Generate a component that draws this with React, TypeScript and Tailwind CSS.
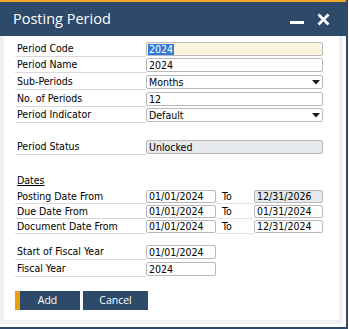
import React from 'react';

const labelFont = "font-['DejaVu_Sans_Condensed','Liberation_Sans',sans-serif] text-[10.5px] text-black";

function Row({ label, h, children }: { label: string; h: string; children?: React.ReactNode }) {
  return (
    <div className={`flex ${h}`}>
      <div className={`w-[131px] shrink-0 border-b border-[#d9d9d9] flex items-center pl-[2px] pt-[1px] ${labelFont}`}>{label}</div>
      {children}
    </div>
  );
}

function Field({ value, w = 'w-[177px]', h = 'h-[14px]', bg = 'bg-white', arrow, selected }: { value: string; w?: string; h?: string; bg?: string; arrow?: boolean; selected?: boolean }) {
  return (
    <div className={`${w} ${h} ${bg} self-end mb-[1px] shrink-0 border border-[#b9b9b9] rounded-[2px] flex items-center pl-[1px] pr-[2px] pt-[1px] ${labelFont} text-[#111]`}>
      {selected ? <span className="bg-[#2f7ad6] text-white px-[1px] leading-[11px]">{value}</span> : <span className="px-[1px]">{value}</span>}
      {arrow && (
        <svg className="ml-auto" width="8" height="5" viewBox="0 0 8 5">
          <polygon points="0,0 8,0 4,4.5" fill="#1a1a1a" />
        </svg>
      )}
    </div>
  );
}

function DateRow({ label, from, to, toBg = 'bg-white' }: { label: string; from: string; to: string; toBg?: string }) {
  return (
    <Row label={label} h="h-[15px]">
      <Field value={from} w="w-[70px]" h="h-[13px]" />
      <div className={`w-[38px] shrink-0 border-b border-[#e3e3e3] flex items-center pl-[6px] pt-[1px] ${labelFont}`}>To</div>
      <Field value={to} w="w-[69px]" h="h-[13px]" bg={toBg} />
    </Row>
  );
}

export default function App() {
  return (
    <div className="w-[349px] h-[329px] bg-white overflow-hidden">
      <div className="w-[348px] h-[329px] flex flex-col border-r-2 border-b-2 border-[#2d4a6a]">
        <header className="h-[36px] shrink-0 bg-[#2d4a6a] border-t-2 border-[#eda623] flex items-center pl-[13px] pr-[16px]">
          <span className="font-['Open_Sans',sans-serif] text-[14.5px] text-white">Posting Period</span>
          <div className="ml-auto flex items-center gap-[13px]">
            <div className="w-[14px] h-[3px] bg-white mt-[6px]" />
            <svg width="13" height="13" viewBox="0 0 13 13">
              <path d="M1.5 1.5 L11.5 11.5 M11.5 1.5 L1.5 11.5" stroke="white" strokeWidth="2.8" />
            </svg>
          </div>
        </header>

        <div className="flex-1 flex flex-col bg-white pr-[3px] pb-[3px]">
          <div className="flex-1 flex flex-col bg-[#f0f0f0] px-[4px] pb-[4px]">
            <div className="flex-1 bg-white pl-[11px] pt-[4px] flex flex-col">
              <Row label="Period Code" h="h-[17px]">
                <Field value="2024" bg="bg-[#fdf4dd]" selected />
              </Row>
              <Row label="Period Name" h="h-[16px]">
                <Field value="2024" />
              </Row>
              <Row label="Sub-Periods" h="h-[17px]">
                <Field value="Months" arrow />
              </Row>
              <Row label="No. of Periods" h="h-[17px]">
                <Field value="12" />
              </Row>
              <Row label="Period Indicator" h="h-[16px]">
                <Field value="Default" arrow />
              </Row>

              <div className="h-[16px]" />
              <Row label="Period Status" h="h-[16px]">
                <Field value="Unlocked" bg="bg-[#e6e9ed]" />
              </Row>

              <div className="h-[20px]" />
              <div className={`h-[14px] flex items-end pl-[2px] ${labelFont}`}>
                <span className="underline underline-offset-[1px]">Dates</span>
              </div>
              <DateRow label="Posting Date From" from="01/01/2024" to="12/31/2026" toBg="bg-[#e6e9ed]" />
              <DateRow label="Due Date From" from="01/01/2024" to="01/31/2024" />
              <DateRow label="Document Date From" from="01/01/2024" to="12/31/2024" />

              <div className="h-[10px]" />
              <Row label="Start of Fiscal Year" h="h-[16px]">
                <Field value="01/01/2024" w="w-[70px]" />
              </Row>
              <Row label="Fiscal Year" h="h-[17px]">
                <Field value="2024" w="w-[70px]" />
              </Row>

              <div className="mt-[14px] flex gap-[3px]">
                <button className="w-[65px] h-[19px] bg-[#2d4a6a] border-l-[5px] border-[#e8a00c] font-['Open_Sans',sans-serif] text-[10.5px] text-white flex items-center justify-center pr-[5px]">
                  Add
                </button>
                <button className="w-[65px] h-[19px] bg-[#2d4a6a] font-['Open_Sans',sans-serif] text-[10.5px] text-white flex items-center justify-center">
                  Cancel
                </button>
              </div>
            </div>
          </div>
        </div>
      </div>
    </div>
  );
}
